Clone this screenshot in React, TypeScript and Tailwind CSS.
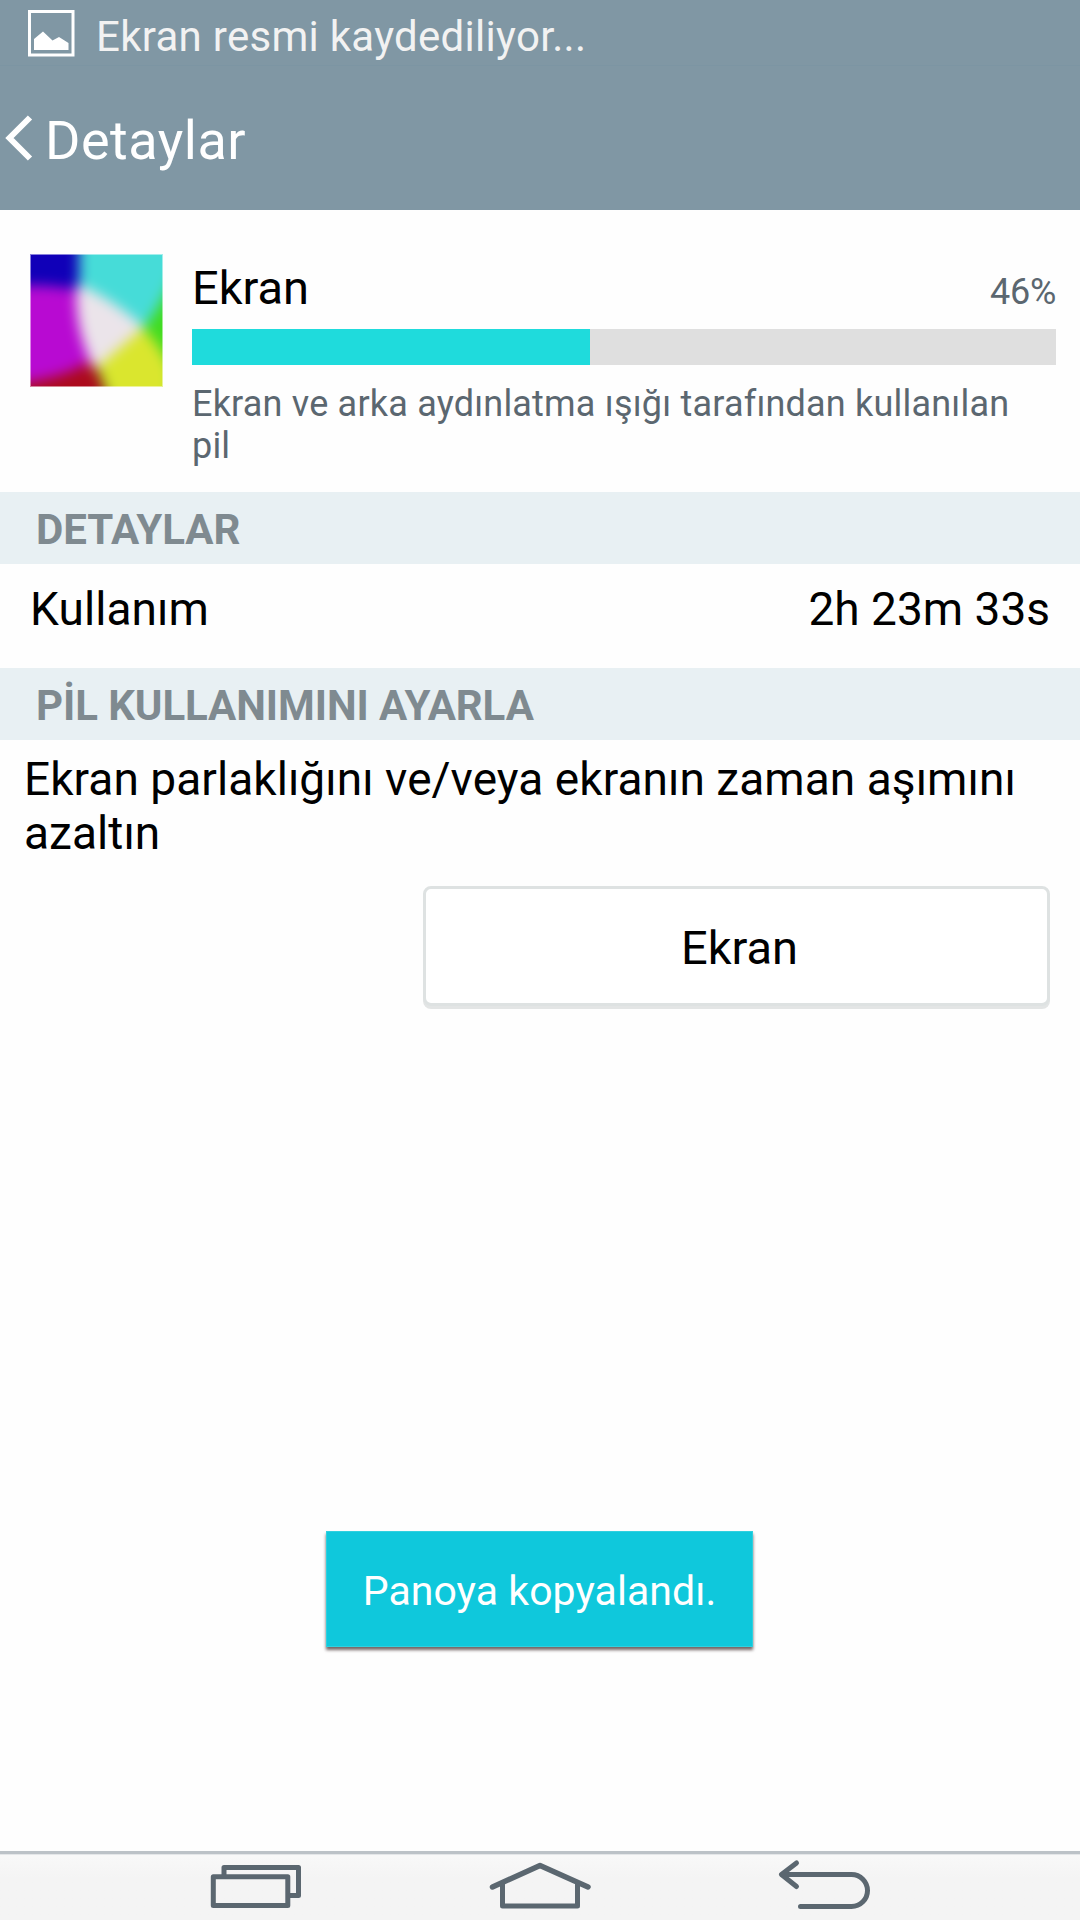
import type { ReactNode } from "react";

const usage = {
  name: "Ekran",
  percent: 46,
  level: 46.08,
  description: "Ekran ve arka aydınlatma ışığı tarafından kullanılan pil",
};

const details = [{ label: "Kullanım", value: "2h 23m 33s" }];

function PictureIcon() {
  return (
    <svg width="48" height="48" viewBox="0 0 48 48" className="mt-0.5 shrink-0">
      <rect x="2.5" y="1.500" width="43.5" height="43.5" fill="none" stroke="#fff" strokeWidth="3" />
      <path d="M7 40V29L16 21.500L25.500 30.500L32 27L41.500 33V40Z" fill="#fff" />
    </svg>
  );
}

function ScreenIcon() {
  return (
    <svg width="133" height="133" viewBox="0 0 133 133" className="shrink-0">
      <defs>
        <filter id="soft" x="-20%" y="-20%" width="140%" height="140%" colorInterpolationFilters="sRGB">
          <feGaussianBlur stdDeviation="6.5" />
        </filter>
      </defs>
      <rect width="133" height="133" fill="#1000b8" />
      <g filter="url(#soft)">
        <path d="M-30 -30H49V32H-30Z" fill="#1000b8" />
        <path d="M-30 31C0 31 25 31 48 36L62 108C50 119 20 127 -30 134Z" fill="#b80ad2" />
        <path d="M-30 132C20 127 45 117 62 106L95 165H-30Z" fill="#ac0a1c" />
        <path d="M165 -30V165H85L66 112L112 62Z" fill="#40dc20" />
        <path d="M49 -30H165C145 20 134 50 111 77L49 36Z" fill="#46dcd8" />
        <path d="M111 73C124 84 134 100 142 116V165H88L66 107Z" fill="#dae62e" />
        <path d="M47 30C72 40 92 54 114 73L64 116C51 88 44 60 47 30Z" fill="#ebe4ea" />
      </g>
      <rect x=".5" y=".5" width="132" height="132" fill="none" stroke="#fff" strokeOpacity=".5" />
    </svg>
  );
}

function SectionHeader({ children }: { children: ReactNode }) {
  return (
    <h2 className="flex h-[72px] items-center bg-[#e8f0f3] pt-[3px] pl-9 text-[42px] leading-none font-bold tracking-[-0.08px] text-[#7f8a90]">
      {children}
    </h2>
  );
}

function NavBar() {
  return (
    <nav className="h-[69px] bg-linear-to-b from-[#f9f9f9] to-[#f4f4f4] to-40%">
      <div className="h-[3px] bg-[#bcc2c7]" />
      <div className="h-px bg-[#e4e6e8]" />
      <svg
        width="1080"
        height="65"
        viewBox="0 1855 1080 65"
        fill="none"
        stroke="#5b6770"
        strokeWidth="5"
        strokeLinejoin="round"
        strokeLinecap="round"
      >
        {/* recent apps */}
        <path d="M224 1876V1867.500H298.500V1895.500H290" />
        <rect x="213.300" y="1876.800" width="74.500" height="28.700" />
        {/* home */}
        <path d="M492.500 1887L540 1865.500L588 1887" strokeWidth="5.500" />
        <path d="M502.500 1884V1906H577.500V1884" />
        {/* back */}
        <path d="M796.500 1863L781.500 1874.500L796.500 1886.500" />
        <path d="M782.500 1874.500H851.500A16 16 0 0 1 851.500 1906.500H800.500" />
      </svg>
    </nav>
  );
}

export default function App() {
  return (
    <div className="relative flex h-[1920px] w-[1080px] flex-col overflow-hidden bg-[#fefefe] font-[Roboto,sans-serif] text-black">
      {/* Status bar + title */}
      <header className="h-[210px] bg-[#8097a4] text-white">
        <div className="flex h-[66px] items-center border-b border-[#7c95a3] pl-[27px]">
          <PictureIcon />
          <span className="pt-[9px] pl-[21px] text-[42px] leading-none tracking-[0.29px] text-[#f2f2f2]">
            Ekran resmi kaydediliyor...
          </span>
        </div>
        <div className="flex h-[144px] items-center pl-1">
          <svg width="30" height="48" viewBox="0 0 30 48" fill="none" stroke="#fff" strokeWidth="6">
            <path d="M26 3.500L5.500 24L26 44.500" />
          </svg>
          <h1 className="pt-[5px] pl-[11px] text-[54px] leading-none tracking-[0.5px]">Detaylar</h1>
        </div>
      </header>

      {/* Usage summary */}
      <section className="flex h-[282px] gap-[29px] pt-11 pr-6 pl-[30px]">
        <ScreenIcon />
        <div className="flex-1">
          <div className="flex h-[75px] items-baseline justify-between pt-2.5">
            <span className="text-[47px] leading-[48px]">{usage.name}</span>
            <span className="text-[36px] leading-none tracking-[-0.3px] text-[#5b6770]">{usage.percent}%</span>
          </div>
          <div className="h-9 bg-[#dfdfdf]">
            <div className="h-full bg-[#1fdbdc]" style={{ width: `${usage.level}%` }} />
          </div>
          <p className="pt-[18px] text-[36px] leading-[42px] tracking-[0.2px] text-[#5b6770]">
            {usage.description}
          </p>
        </div>
      </section>

      <SectionHeader>DETAYLAR</SectionHeader>
      {details.map((row) => (
        <div
          key={row.label}
          className="flex h-[104px] items-center justify-between pr-[30px] pb-[15px] pl-[30px] text-[46px] leading-none"
        >
          <span className="tracking-[0.1px]">{row.label}</span>
          <span>{row.value}</span>
        </div>
      ))}

      <SectionHeader>PİL KULLANIMINI AYARLA</SectionHeader>
      <p className="pt-3 pr-6 pl-6 text-[46px] leading-[54px] tracking-[0.06px]">
        Ekran parlaklığını ve/veya ekranın zaman aşımını azaltın
      </p>
      <button className="mt-[26px] mr-[30px] h-[120px] w-[627px] self-end rounded-lg border-3 border-[#dee2e2] bg-white pt-[3px] pl-1.5 text-[47px] leading-none shadow-[0_3px_0_#e3e5e5]">
        Ekran
      </button>

      {/* Toast */}
      <div className="absolute top-[1531px] left-[326px] flex h-[116px] w-[427px] items-center justify-center border border-[#2fd0df] bg-[#0fc8dc] pt-[5px] text-[41px] leading-none tracking-[0.05px] text-white shadow-[0_3px_3px_rgba(40,20,20,0.65)]">
        Panoya kopyalandı.
      </div>

      <div className="mt-auto">
        <NavBar />
      </div>
    </div>
  );
}
